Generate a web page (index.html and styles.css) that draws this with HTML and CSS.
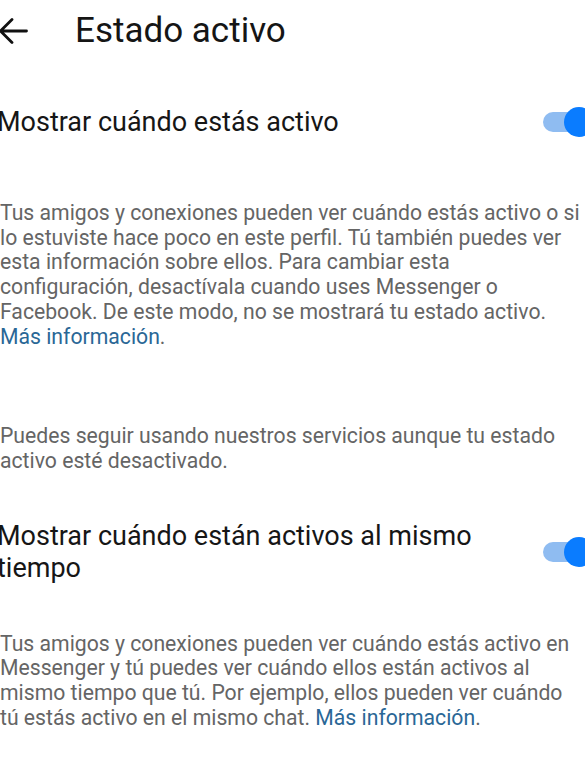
FILE: index.html
```html
<!DOCTYPE html>
<html lang="es">
<head>
<meta charset="utf-8">
<title>Estado activo</title>
<link rel="stylesheet" href="styles.css">
</head>
<body>
<div class="page">
  <header class="topbar">
    <svg class="back" viewBox="0 0 30 28" width="30" height="28" aria-hidden="true">
      <path d="M28.5 14H2.5M14 2.5L2.5 14 14 25.5" fill="none" stroke="#111" stroke-width="2.8" stroke-linecap="round" stroke-linejoin="round"/>
    </svg>
    <h1 class="title">Estado activo</h1>
  </header>

  <section class="setting first">
    <div class="row">
      <h2 class="label">Mostrar cuándo estás activo</h2>
      <span class="toggle"><span class="knob"></span></span>
    </div>
    <p class="desc">Tus amigos y conexiones pueden ver cuándo estás activo o si<br>lo estuviste hace poco en este perfil. Tú también puedes ver<br>esta información sobre ellos. Para cambiar esta<br>configuración, desactívala cuando uses Messenger o<br>Facebook. De este modo, no se mostrará tu estado activo.<br><a class="link" href="#">Más información</a>.</p>
  </section>

  <p class="desc note">Puedes seguir usando nuestros servicios aunque tu estado<br>activo esté desactivado.</p>

  <section class="setting second">
    <div class="row">
      <h2 class="label">Mostrar cuándo están activos al mismo tiempo</h2>
      <span class="toggle"><span class="knob"></span></span>
    </div>
    <p class="desc">Tus amigos y conexiones pueden ver cuándo estás activo en<br>Messenger y tú puedes ver cuándo ellos están activos al<br>mismo tiempo que tú. Por ejemplo, ellos pueden ver cuándo<br>tú estás activo en el mismo chat. <a class="link" href="#">Más información</a>.</p>
  </section>
</div>
</body>
</html>
```

FILE: styles.css
```css
html, body {
  margin: 0;
  padding: 0;
  background: #ffffff;
  overflow: hidden;
}
body {
  width: 585px;
  height: 780px;
  font-family: Roboto, "Noto Sans", "Liberation Sans", sans-serif;
  color: #111;
}
.page {
  display: flex;
  flex-direction: column;
  padding-top: 11px;
}
.topbar {
  display: flex;
  align-items: center;
  height: 40px;
}
.back {
  margin-left: -2px;
  flex: none;
}
.title {
  margin: 0 0 0 47px;
  font-size: 35px;
  line-height: 40px;
  font-weight: 400;
  color: #151515;
}
.setting.first {
  margin-top: 55px;
}
.row {
  display: flex;
  align-items: center;
  justify-content: space-between;
}
.label {
  margin: 0 0 0 -3px;
  font-size: 27px;
  line-height: 32px;
  font-weight: 400;
  color: #161616;
  max-width: 500px;
}
.toggle {
  position: relative;
  flex: none;
  width: 42px;
  height: 20px;
  background: #8fbcf1;
  border-radius: 10px 0 0 10px;
}
.knob {
  position: absolute;
  left: 21px;
  top: -5px;
  width: 30px;
  height: 30px;
  border-radius: 50%;
  background: #0a7cff;
}
.desc {
  margin: 0 -20px 0 0;
  font-size: 21.2px;
  line-height: 24.7px;
  color: #656565;
  white-space: nowrap;
}
.setting.first .desc {
  margin-top: 63px;
}
.link {
  color: #2a6796;
  text-decoration: none;
}
.note {
  margin-top: 75px;
}
.setting.second {
  margin-top: 46px;
}
.setting.second .desc {
  margin-top: 48px;
}
```
